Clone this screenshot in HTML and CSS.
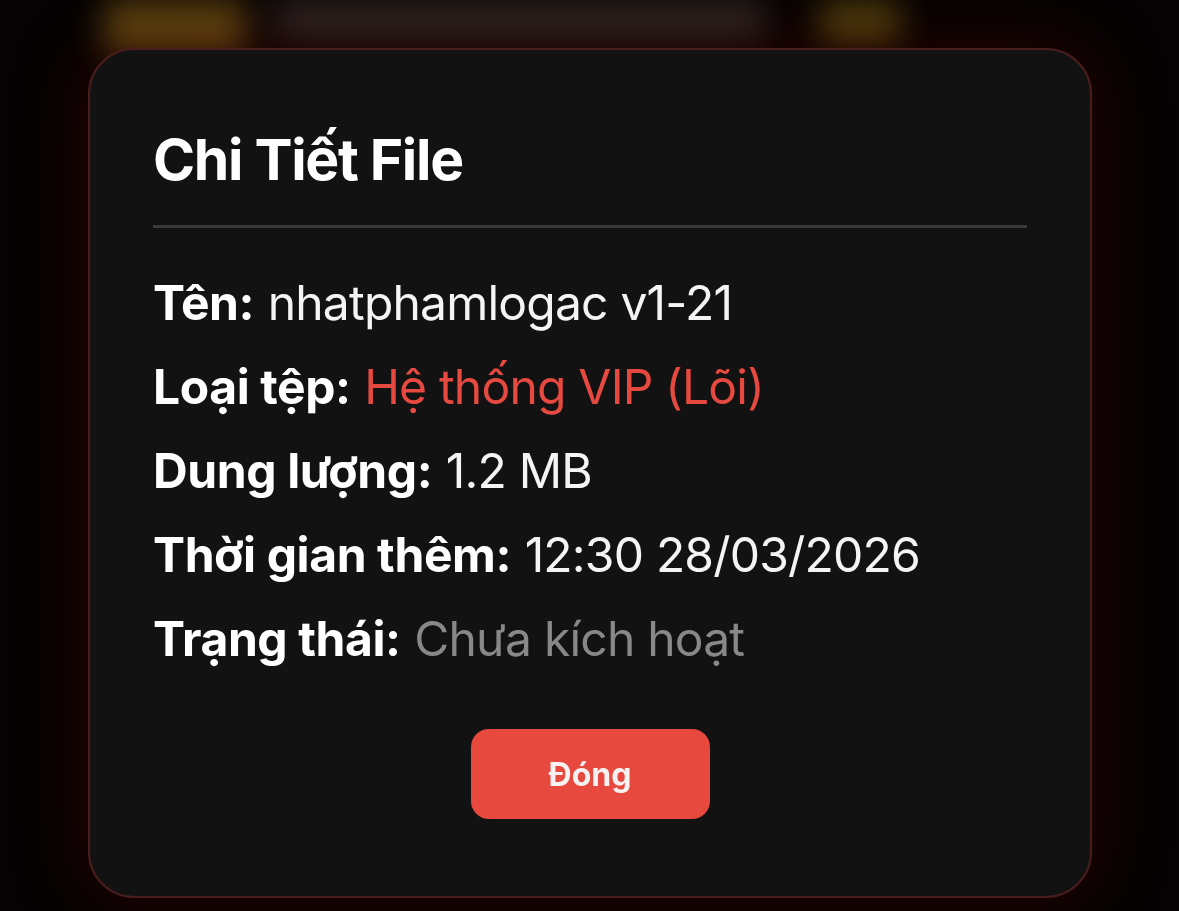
FILE: index.html
```html
<!DOCTYPE html>
<html lang="vi">
<head>
    <meta charset="UTF-8">
    <meta name="viewport" content="width=device-width, initial-scale=1.0">
    <title>Chi Tiết File</title>
    <link rel="stylesheet" href="styles.css">
</head>
<body>
    <!-- Trang phía sau (bị làm mờ) -->
    <div class="backdrop">
        <div class="bd-icon"></div>
        <div class="bd-search"></div>
        <div class="bd-pill"></div>
    </div>

    <!-- Hộp thoại chi tiết -->
    <div class="overlay">
        <div class="modal">
            <h2 class="modal-title">Chi Tiết File</h2>
            <hr class="divider">
            <div class="info">
                <p><b>Tên:</b> <span class="val">nhatphamlogac v1-21</span></p>
                <p><b>Loại tệp:</b> <span class="val red">Hệ thống VIP (Lõi)</span></p>
                <p><b>Dung lượng:</b> <span class="val">1.2 MB</span></p>
                <p><b>Thời gian thêm:</b> <span class="val">12:30 28/03/2026</span></p>
                <p><b>Trạng thái:</b> <span class="val gray">Chưa kích hoạt</span></p>
            </div>
            <div class="actions">
                <button class="btn-close">Đóng</button>
            </div>
        </div>
    </div>
</body>
</html>
```

FILE: styles.css
```css
body {
    margin: 0;
    padding: 0;
    width: 1179px;
    height: 911px;
    overflow: hidden;
    background-color: #050303;
    font-family: Inter, "Noto Sans", sans-serif;
    color: #ffffff;
}
.backdrop {
    display: flex;
    align-items: flex-start;
    gap: 30px;
    padding: 0 0 0 105px;
    height: 60px;
    filter: blur(16px);
}
.bd-icon {
    width: 140px;
    height: 55px;
    background-color: #5a4310;
}
.bd-search {
    width: 490px;
    height: 40px;
    background-color: #2a2522;
}
.bd-pill {
    width: 80px;
    height: 45px;
    margin-left: 25px;
    background-color: #4a3c0c;
}
.overlay {
    position: fixed;
    top: 0;
    left: 0;
    right: 0;
    bottom: 0;
    padding: 48px 87px 0 88px;
}
.modal {
    background-color: #121212;
    border: 2px solid #4a1d1d;
    border-radius: 46px;
    padding: 76px 63px 77px;
    box-shadow: 0 0 70px 10px rgba(100, 0, 0, 0.3);
}
.modal-title {
    margin: 0;
    font-size: 57px;
    line-height: 68px;
    font-weight: 700;
    letter-spacing: -1.3px;
}
.divider {
    margin: 31px 0 0;
    border: none;
    height: 3px;
    background-color: #3a3a3a;
}
.info {
    margin-top: 33px;
}
.info p {
    margin: 0;
    font-size: 48px;
    line-height: 84px;
    white-space: nowrap;
}
.info b {
    font-weight: 700;
    letter-spacing: -0.4px;
}
.val {
    font-weight: 400;
    color: #f4f4f4;
    letter-spacing: -0.8px;
}
.val.red {
    color: #e5493f;
}
.val.gray {
    color: #888888;
}
.actions {
    display: flex;
    justify-content: center;
    margin-top: 48px;
}
.btn-close {
    width: 239px;
    height: 90px;
    border: none;
    border-radius: 18px;
    background-color: #e8493f;
    color: #f7f2f2;
    font-family: Inter, "Noto Sans", sans-serif;
    font-size: 32px;
    font-weight: 700;
}
```
